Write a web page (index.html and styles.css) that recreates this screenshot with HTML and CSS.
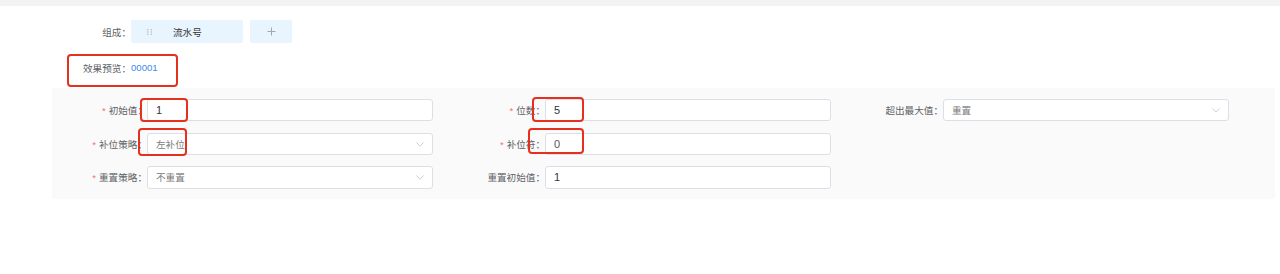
FILE: index.html
```html
<!DOCTYPE html>
<html lang="zh-CN">
<head>
  <meta charset="UTF-8" />
  <title>流水号规则</title>
  <link rel="stylesheet" href="styles.css">
</head>
<body>
  <div class="topbar"></div>

  <div class="head">
    <div class="head-row">
      <span class="head-label">组成：</span>
      <div class="chip">
        <svg class="handle" width="5" height="6" viewBox="0 0 5 6">
          <circle cx="0.8" cy="0.8" r="0.7" fill="#b4b4b4"/>
          <circle cx="4.2" cy="0.8" r="0.7" fill="#b4b4b4"/>
          <circle cx="0.8" cy="3" r="0.7" fill="#b4b4b4"/>
          <circle cx="4.2" cy="3" r="0.7" fill="#b4b4b4"/>
          <circle cx="0.8" cy="5.2" r="0.7" fill="#b4b4b4"/>
          <circle cx="4.2" cy="5.2" r="0.7" fill="#b4b4b4"/>
        </svg>
        流水号
      </div>
      <button class="add-btn" type="button">
        <svg width="9" height="9" viewBox="0 0 9 9"><path d="M4.5 0.5 V8.5 M0.5 4.5 H8.5" stroke="#a3a6ad" stroke-width="1"/></svg>
      </button>
    </div>
    <div class="head-row preview">
      <span class="head-label">效果预览：</span>
      <span class="preview-value">00001</span>
      <span class="mark mark-preview"></span>
    </div>
  </div>

  <div class="panel">
    <div class="field">
      <label class="field-label"><span class="req">*</span>初始值：</label>
      <div class="input num">1</div>
      <span class="mark mark-a"></span>
    </div>
    <div class="field">
      <label class="field-label"><span class="req">*</span>位数：</label>
      <div class="input num">5</div>
      <span class="mark mark-b"></span>
    </div>
    <div class="field">
      <label class="field-label">超出最大值：</label>
      <div class="input select">重置
        <svg class="arrow" width="8" height="5" viewBox="0 0 8 5"><path d="M0.5 0.5 L4 4.2 L7.5 0.5" fill="none" stroke="#c8cbd2" stroke-width="0.9"/></svg>
      </div>
    </div>

    <div class="field">
      <label class="field-label"><span class="req">*</span>补位策略：</label>
      <div class="input select">左补位
        <svg class="arrow" width="8" height="5" viewBox="0 0 8 5"><path d="M0.5 0.5 L4 4.2 L7.5 0.5" fill="none" stroke="#c8cbd2" stroke-width="0.9"/></svg>
      </div>
      <span class="mark mark-c"></span>
    </div>
    <div class="field">
      <label class="field-label"><span class="req">*</span>补位符：</label>
      <div class="input num soft">0</div>
      <span class="mark mark-d"></span>
    </div>
    <div class="field empty"></div>

    <div class="field">
      <label class="field-label"><span class="req">*</span>重置策略：</label>
      <div class="input select">不重置
        <svg class="arrow" width="8" height="5" viewBox="0 0 8 5"><path d="M0.5 0.5 L4 4.2 L7.5 0.5" fill="none" stroke="#c8cbd2" stroke-width="0.9"/></svg>
      </div>
    </div>
    <div class="field">
      <label class="field-label">重置初始值：</label>
      <div class="input num">1</div>
    </div>
  </div>
</body>
</html>
```

FILE: styles.css
```css
body {
  margin: 0;
  font-family: "Liberation Sans", "Noto Sans CJK SC", sans-serif;
  font-size: 9.6px;
  color: #606266;
  background: #fff;
}

.topbar {
  height: 6px;
  background-color: #f3f3f3;
}

.head {
  padding-left: 67px;
}

.head-row {
  display: flex;
  align-items: center;
  height: 23px;
  margin-top: 14px;
}

.head-row.preview {
  position: relative;
  margin-top: 13px;
  margin-bottom: 9px;
}

.head-label {
  width: 64px;
  text-align: right;
  flex-shrink: 0;
}

.chip {
  display: flex;
  align-items: center;
  width: 112px;
  height: 23px;
  box-sizing: border-box;
  padding-left: 16px;
  background-color: #e8f4fe;
  border-radius: 2px;
  color: #333;
}

.handle {
  margin-right: 21px;
}

.add-btn {
  display: flex;
  align-items: center;
  justify-content: center;
  width: 42px;
  height: 23px;
  margin-left: 7px;
  border: none;
  border-radius: 2px;
  background-color: #e8f4fe;
  padding: 0;
}

.preview-value {
  color: #3b8af0;
}

.panel {
  margin-left: 52px;
  width: 1223px;
  box-sizing: border-box;
  padding: 11px 0 10px 6px;
  background-color: #fafafa;
  display: grid;
  grid-template-columns: repeat(3, 375px);
  column-gap: 23px;
  row-gap: 11.2px;
}

.field {
  position: relative;
  display: flex;
  align-items: center;
  height: 22.4px;
}

.field-label {
  width: 89px;
  flex-shrink: 0;
  text-align: right;
}

.req {
  color: #f56c6c;
  margin-right: 3px;
}

.input {
  position: relative;
  width: 286px;
  height: 22.4px;
  box-sizing: border-box;
  border: 1px solid #dcdfe6;
  border-radius: 3px;
  background: #fff;
  padding: 0 8px;
  display: flex;
  align-items: center;
  color: #333;
}

.input.num {
  font-size: 11px;
}

.input.soft {
  color: #555;
}

.input.select {
  color: #7a7a7a;
}

.arrow {
  position: absolute;
  right: 8px;
  top: 8px;
}

.mark {
  position: absolute;
  border: 2px solid #e5301f;
  border-radius: 4px;
  box-sizing: border-box;
  pointer-events: none;
}

.mark-preview {
  left: 0;
  top: -2px;
  width: 111px;
  height: 33px;
}

.mark-a {
  left: 82px;
  top: -1px;
  width: 48px;
  height: 24px;
}

.mark-b {
  left: 76px;
  top: -2px;
  width: 52px;
  height: 25px;
}

.mark-c {
  left: 80px;
  top: -4.6px;
  width: 49px;
  height: 28px;
}

.mark-d {
  left: 72px;
  top: -4.6px;
  width: 56px;
  height: 26px;
}
```
